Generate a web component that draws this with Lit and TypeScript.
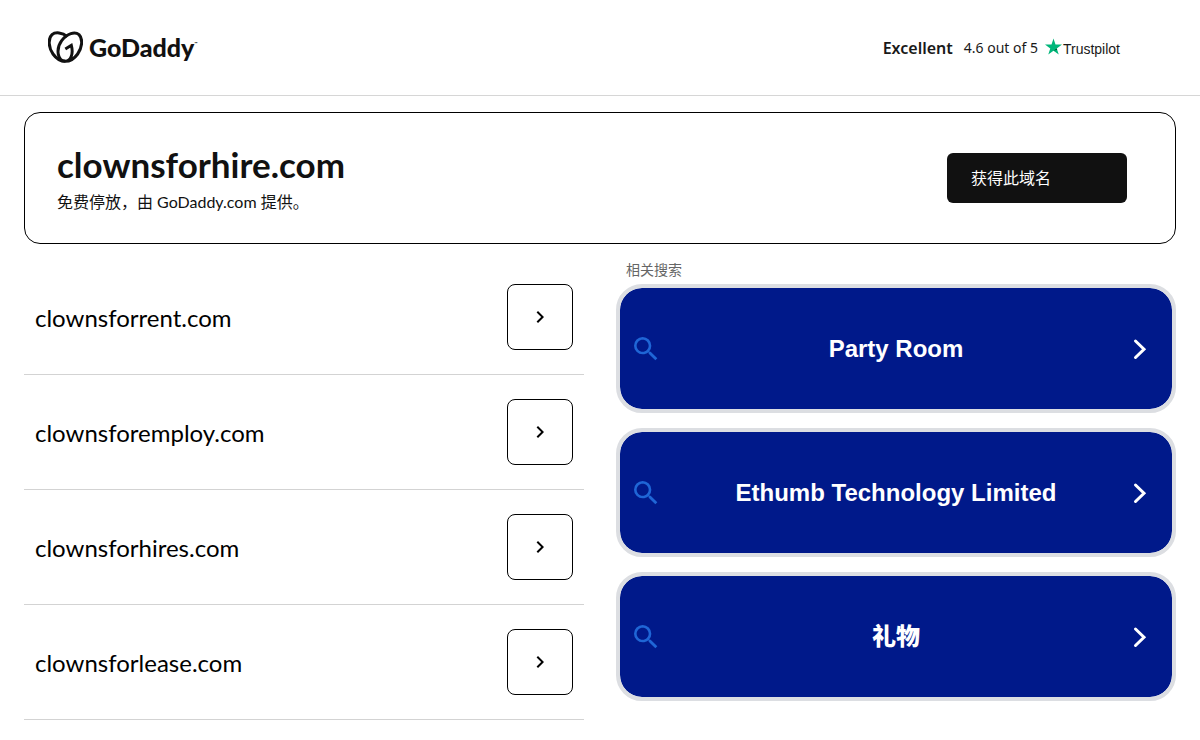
import { LitElement, html, css } from "lit";
import { customElement, property } from "lit/decorators.js";

@customElement("brand-logo")
class BrandLogo extends LitElement {
  static styles = css`
    :host {
      display: block;
    }
    .brand {
      display: flex;
      align-items: center;
      gap: 6px;
      color: #111;
      text-decoration: none;
    }
    .heart {
      display: block;
      width: 35px;
      height: 35px;
      fill: none;
      stroke: currentColor;
      stroke-width: 9;
    }
    .word {
      padding-bottom: 2px;
      font: 900 25px/32px Lato, sans-serif;
    }
    .tm {
      font-size: 4px;
      vertical-align: 12px;
      line-height: 1;
    }
  `;

  render() {
    return html`
      <a class="brand" href="#">
        <svg class="heart" viewBox="9 6 105 105" aria-hidden="true">
          <path d="M67 26C52 13 31 11 21 20C8 32 11 60 24 78C34 92 48 100 61 100"></path>
          <path
            d="M61 63L79 52C86 78 77 100 61 100C37 100 32 62 50 38C66 16 90 10 102 20C115 33 111 60 98 78C88 92 74 100 61 100"
          ></path>
        </svg>
        <span class="word">GoDaddy<span class="tm">™</span></span>
      </a>
    `;
  }
}

@customElement("trust-rating")
class TrustRating extends LitElement {
  static styles = css`
    :host {
      display: flex;
      align-items: center;
      color: #191919;
      font: 14px/20px "Noto Sans", sans-serif;
    }
    .grade {
      margin-right: 11px;
      font-size: 16px;
      font-weight: 600;
    }
    .score {
      margin-right: 7px;
    }
    .pilot {
      display: flex;
      align-items: center;
      gap: 1px;
      color: #191919;
      font: 14px/20px "Liberation Sans", sans-serif;
      text-decoration: none;
    }
    .star {
      display: block;
      width: 17px;
      height: 17px;
      margin-bottom: 3px;
    }
    .maker {
      padding-top: 2px;
    }
  `;

  render() {
    return html`
      <span class="grade">Excellent</span>
      <span class="score">4.6 out of 5</span>
      <a class="pilot" href="#">
        <svg class="star" viewBox="0 0 17 16" aria-hidden="true">
          <path fill="#00b67a" d="M17 6.1h-6.5L8.500 0l-2 6.100H0l5.250 3.800-2 6.100 5.250-3.800 5.250 3.800-2-6.100z"></path>
          <path fill="#005128" d="M12.200 11.300l-.45-1.400-3.250 2.300z"></path>
        </svg>
        <span class="maker">Trustpilot</span>
      </a>
    `;
  }
}

@customElement("domain-row")
class DomainRow extends LitElement {
  @property() name = "";

  static styles = css`
    :host {
      display: flex;
      align-items: center;
      justify-content: space-between;
      padding: 24px 11px;
      border-bottom: 1px solid #d3d3d3;
    }
    .name {
      padding-top: 2px;
      color: #000;
      font: 24px/32px Lato, sans-serif;
    }
    .go {
      display: grid;
      place-items: center;
      width: 66px;
      height: 66px;
      padding: 0;
      border: 1px solid #000;
      border-radius: 8px;
      background: #fff;
      cursor: pointer;
    }
    .arrow {
      display: block;
      width: 24px;
      height: 24px;
    }
  `;

  render() {
    return html`
      <span class="name">${this.name}</span>
      <button class="go" type="button" aria-label=${this.name}>
        <svg class="arrow" viewBox="0 0 24 24" aria-hidden="true">
          <path d="M10 6L8.590 7.410 13.170 12l-4.580 4.590L10 18l6-6z"></path>
        </svg>
      </button>
    `;
  }
}

@customElement("search-card")
class SearchCard extends LitElement {
  @property() term = "";

  static styles = css`
    :host {
      display: block;
    }
    .card {
      box-sizing: border-box;
      display: grid;
      grid-template-columns: 32px 1fr 32px;
      align-items: center;
      min-height: 129px;
      padding: 0 10px;
      border: 4px solid #dcdee2;
      border-radius: 26px;
      background: #00198a;
      background-clip: padding-box;
      color: #fff;
      font: 900 24px/32px "Liberation Sans", "Noto Sans CJK SC", sans-serif;
      text-align: center;
      text-decoration: none;
    }
    .icon {
      display: block;
      width: 32px;
      height: 32px;
    }
    .lens {
      fill: #1f66d6;
    }
    .next {
      fill: none;
      stroke: #fff;
      stroke-width: 3;
      stroke-linecap: round;
    }
  `;

  render() {
    return html`
      <a class="card" href="#">
        <svg class="icon lens" viewBox="0 0 24 24" aria-hidden="true">
          <path
            d="M15.500 14h-.79l-.28-.27A6.471 6.471 0 0016 9.500 6.500 6.500 0 109.500 16c1.610 0 3.090-.59 4.230-1.570l.27.28v.79l5 4.990L20.490 19l-4.990-5zm-6 0C7.010 14 5 11.990 5 9.500S7.010 5 9.500 5 14 7.010 14 9.500 11.990 14 9.500 14z"
          ></path>
        </svg>
        <span>${this.term}</span>
        <svg class="icon next" viewBox="0 0 32 32" aria-hidden="true">
          <path d="M5.500 8l8.500 8.250-8.500 8.250"></path>
        </svg>
      </a>
    `;
  }
}

@customElement("app-root")
class AppRoot extends LitElement {
  private domains = [
    "clownsforrent.com",
    "clownsforemploy.com",
    "clownsforhires.com",
    "clownsforlease.com",
  ];
  private terms = ["Party Room", "Ethumb Technology Limited", "礼物"];

  static styles = css`
    :host {
      display: block;
      background: #fff;
      color: #111;
      font-family: Lato, "Noto Sans CJK SC", sans-serif;
    }
    .top {
      box-sizing: border-box;
      display: flex;
      align-items: center;
      justify-content: space-between;
      min-height: 96px;
      padding: 0 80px 0 48px;
      border-bottom: 1px solid #d6d6d6;
    }
    .main {
      display: grid;
      gap: 16px;
      padding: 16px 24px;
    }
    .hero {
      display: flex;
      align-items: center;
      justify-content: space-between;
      padding: 27px 48px 27px 32px;
      border: 1px solid #000;
      border-radius: 16px;
    }
    .title {
      margin: 0;
      font-size: 35px;
      font-weight: 700;
      line-height: 48px;
    }
    .note {
      margin: 0;
      font-size: 16px;
      line-height: 28px;
    }
    .get {
      width: 180px;
      height: 50px;
      padding: 0 24px 2px;
      border: 0;
      border-radius: 6px;
      background: #111;
      color: #fff;
      font: 16px/24px "Noto Sans CJK SC", sans-serif;
      text-align: left;
      cursor: pointer;
    }
    .columns {
      display: grid;
      grid-template-columns: 1fr 1fr;
      align-items: start;
      gap: 32px;
    }
    .related {
      display: grid;
      gap: 15px;
    }
    .label {
      margin: 0 10px -9px;
      color: #666;
      font: 14px/18px "Noto Sans CJK SC", sans-serif;
    }
  `;

  render() {
    return html`
      <header class="top">
        <brand-logo></brand-logo>
        <trust-rating></trust-rating>
      </header>
      <main class="main">
        <section class="hero">
          <div>
            <h1 class="title">clownsforhire.com</h1>
            <p class="note" lang="zh-CN">免费停放，由 GoDaddy.com 提供。</p>
          </div>
          <button class="get" type="button" lang="zh-CN">获得此域名</button>
        </section>
        <div class="columns">
          <section>${this.domains.map((d) => html`<domain-row .name=${d}></domain-row>`)}</section>
          <section class="related" lang="zh-CN">
            <h2 class="label">相关搜索</h2>
            ${this.terms.map((t) => html`<search-card .term=${t}></search-card>`)}
          </section>
        </div>
      </main>
    `;
  }
}
